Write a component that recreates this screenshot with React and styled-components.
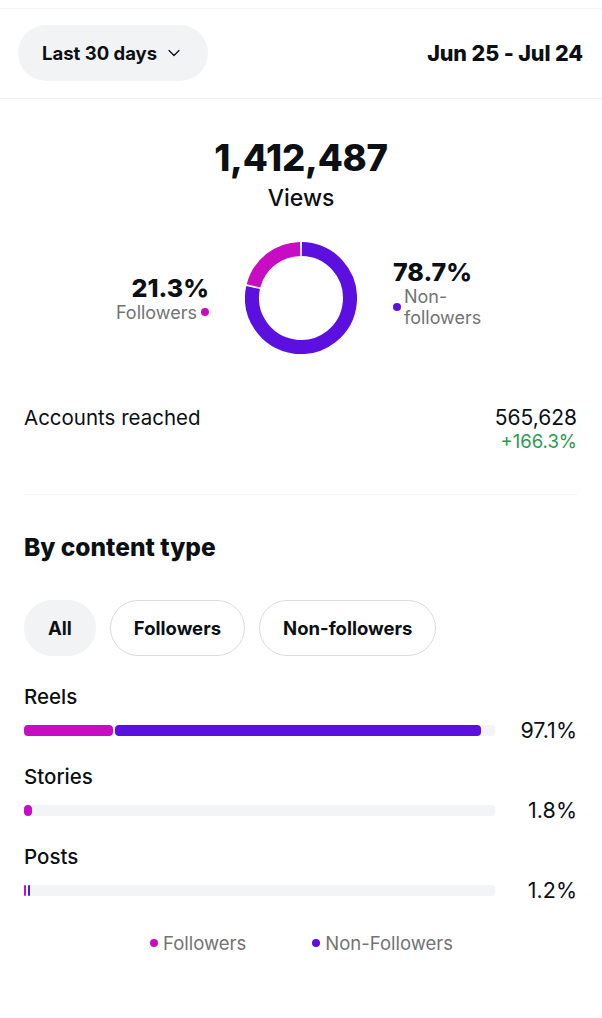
import React from "react";
import styled, { createGlobalStyle } from "styled-components";
import { ChevronDown } from "lucide-react";

const PINK = "#c80cc4";
const PURPLE = "#5b10e0";

const Global = createGlobalStyle`
  html, body { margin: 0; padding: 0; background: #fff; }
  body { font-family: Inter, "Noto Sans", "Liberation Sans", sans-serif; color: #0c1014; -webkit-font-smoothing: antialiased; }
  * { box-sizing: border-box; }
`;

const Page = styled.div`
  width: 602px;
  min-height: 1018px;
  background: #fff;
  padding-top: 8px;
`;

const Header = styled.header`
  display: flex;
  align-items: center;
  justify-content: space-between;
  padding: 16px 19px 17px 18px;
  border-top: 1px solid #f4f4f4;
  border-bottom: 1px solid #f2f2f2;
`;

const RangePill = styled.button`
  display: flex;
  align-items: center;
  gap: 7px;
  height: 56px;
  padding: 0 24px 0 24px;
  border: none;
  border-radius: 28px;
  background: #f2f3f5;
  font-family: inherit;
  font-size: 18.5px;
  font-weight: 700;
  color: #0c1014;
`;

const DateRange = styled.div`
  font-size: 21.5px;
  font-weight: 800;
  letter-spacing: -0.1px;
`;

const Summary = styled.section`
  display: flex;
  flex-direction: column;
  align-items: center;
  padding-top: 37px;
`;

const BigNumber = styled.div`
  font-size: 36.5px;
  line-height: 44px;
  font-weight: 800;
  letter-spacing: -0.2px;
`;

const BigLabel = styled.div`
  margin-top: 4px;
  font-size: 23px;
  line-height: 28px;
  font-weight: 500;
`;

const DonutRow = styled.div`
  margin-top: 30px;
  width: 100%;
  display: grid;
  grid-template-columns: 1fr 112px 1fr;
  column-gap: 36px;
  align-items: center;
`;

const SideBlock = styled.div`
  display: flex;
  flex-direction: column;
  align-items: ${(p) => (p.$right ? "flex-start" : "flex-end")};
  padding-bottom: ${(p) => (p.$right ? "10px" : "0")};
`;

const Pct = styled.div`
  font-size: 25px;
  line-height: 28px;
  font-weight: 800;
`;

const SideLabel = styled.div`
  display: flex;
  align-items: center;
  gap: ${(p) => (p.$tight ? "3px" : "4px")};
  font-size: 18px;
  line-height: 21px;
  color: #737373;
`;

const WrapText = styled.span`
  max-width: 90px;
`;

const Dot = styled.span`
  display: inline-block;
  width: 8px;
  height: 8px;
  border-radius: 50%;
  background: ${(p) => p.$color};
  flex-shrink: 0;
`;

const Content = styled.div`
  padding: 0 25px 0 24px;
`;

const ReachRow = styled.div`
  margin-top: 52px;
  display: flex;
  justify-content: space-between;
  align-items: flex-start;
  padding-bottom: 42px;
  border-bottom: 1px solid #f2f2f2;
`;

const ReachLabel = styled.div`
  font-size: 20.5px;
  line-height: 24px;
`;

const ReachValues = styled.div`
  display: flex;
  flex-direction: column;
  align-items: flex-end;
`;

const ReachNum = styled.div`
  font-size: 21px;
  line-height: 24px;
`;

const Growth = styled.div`
  font-size: 18.5px;
  line-height: 22px;
  color: #2a9a4e;
`;

const SectionTitle = styled.h2`
  margin: 38px 0 0;
  font-size: 24.5px;
  line-height: 28px;
  font-weight: 800;
`;

const Tabs = styled.div`
  margin-top: 39px;
  display: flex;
  gap: 14px;
`;

const Tab = styled.button`
  height: 56px;
  padding: 0 ${(p) => (p.$active ? "23px" : "23px")};
  border-radius: 28px;
  border: 1px solid ${(p) => (p.$active ? "#f2f3f5" : "#dbdbdb")};
  background: ${(p) => (p.$active ? "#f2f3f5" : "#fff")};
  font-family: inherit;
  font-size: 18.5px;
  font-weight: 700;
  color: #0c1014;
`;

const Rows = styled.div`
  margin-top: 29px;
  display: flex;
  flex-direction: column;
  gap: 23px;
`;

const TypeRow = styled.div`
  display: flex;
  flex-direction: column;
  gap: 9px;
`;

const TypeLabel = styled.div`
  font-size: 20.5px;
  line-height: 24px;
  font-weight: 500;
`;

const BarLine = styled.div`
  display: grid;
  grid-template-columns: 471px 1fr;
  align-items: center;
  height: 24px;
`;

const Track = styled.div`
  height: 11px;
  background: #f3f4f6;
  border-radius: 3px;
  display: flex;
`;

const Fill = styled.div`
  display: flex;
  gap: 2px;
  background: #fff;
  height: 100%;
`;

const Seg = styled.div`
  height: 100%;
  border-radius: 4px;
  background: ${(p) => p.$color};
  flex-shrink: 0;
`;

const BarPct = styled.div`
  text-align: right;
  font-size: 21.5px;
  line-height: 24px;
`;

const Legend = styled.div`
  margin-top: 30px;
  display: flex;
  justify-content: center;
  gap: 66px;
  padding-left: 2px;
`;

const LegendItem = styled.div`
  display: flex;
  align-items: center;
  gap: 5px;
  font-size: 18.5px;
  line-height: 22px;
  color: #737373;
`;

function arcPath(cx, cy, r, a0, a1) {
  const rad = (a) => ((a - 90) * Math.PI) / 180;
  const x0 = cx + r * Math.cos(rad(a0));
  const y0 = cy + r * Math.sin(rad(a0));
  const x1 = cx + r * Math.cos(rad(a1));
  const y1 = cy + r * Math.sin(rad(a1));
  const large = a1 - a0 > 180 ? 1 : 0;
  return `M ${x0} ${y0} A ${r} ${r} 0 ${large} 1 ${x1} ${y1}`;
}

function Donut({ followers }) {
  const gap = 2;
  const split = 360 * (1 - followers / 100);
  return (
    <svg width="112" height="112" viewBox="0 0 112 112">
      <path d={arcPath(56, 56, 49, gap / 2, split - gap / 2)} fill="none" stroke={PURPLE} strokeWidth="14" />
      <path d={arcPath(56, 56, 49, split + gap / 2, 360 - gap / 2)} fill="none" stroke={PINK} strokeWidth="14" />
    </svg>
  );
}

const types = [
  { name: "Reels", total: 97.1, f: 19.6 },
  { name: "Stories", total: 1.8, f: 100 },
  { name: "Posts", total: 1.2, f: 35 },
];

export default function App() {
  return (
    <Page>
      <Global />
      <Header>
        <RangePill>
          Last 30 days <ChevronDown size={20} strokeWidth={1.5} />
        </RangePill>
        <DateRange>Jun 25 - Jul 24</DateRange>
      </Header>

      <Summary>
        <BigNumber>1,412,487</BigNumber>
        <BigLabel>Views</BigLabel>
        <DonutRow>
          <SideBlock>
            <Pct>21.3%</Pct>
            <SideLabel>
              Followers <Dot $color={PINK} />
            </SideLabel>
          </SideBlock>
          <Donut followers={21.3} />
          <SideBlock $right>
            <Pct>78.7%</Pct>
            <SideLabel $tight>
              <Dot $color={PURPLE} />
              <WrapText>Non-followers</WrapText>
            </SideLabel>
          </SideBlock>
        </DonutRow>
      </Summary>

      <Content>
        <ReachRow>
          <ReachLabel>Accounts reached</ReachLabel>
          <ReachValues>
            <ReachNum>565,628</ReachNum>
            <Growth>+166.3%</Growth>
          </ReachValues>
        </ReachRow>

        <SectionTitle>By content type</SectionTitle>
        <Tabs>
          <Tab $active>All</Tab>
          <Tab>Followers</Tab>
          <Tab>Non-followers</Tab>
        </Tabs>

        <Rows>
          {types.map((t) => {
            const w = (471 * t.total) / 100;
            const split = t.f < 100;
            const fw = split ? Math.max(2, ((w - 2) * t.f) / 100) : w;
            const nw = split ? Math.max(2, w - 2 - fw) : 0;
            return (
              <TypeRow key={t.name}>
                <TypeLabel>{t.name}</TypeLabel>
                <BarLine>
                  <Track>
                    <Fill style={{ width: `${w}px` }}>
                      <Seg $color={PINK} style={{ width: `${fw}px` }} />
                      {nw > 0 && <Seg $color={PURPLE} style={{ width: `${nw}px` }} />}
                    </Fill>
                  </Track>
                  <BarPct>{t.total}%</BarPct>
                </BarLine>
              </TypeRow>
            );
          })}
        </Rows>

        <Legend>
          <LegendItem>
            <Dot $color={PINK} />
            Followers
          </LegendItem>
          <LegendItem>
            <Dot $color={PURPLE} />
            Non-Followers
          </LegendItem>
        </Legend>
      </Content>
    </Page>
  );
}
